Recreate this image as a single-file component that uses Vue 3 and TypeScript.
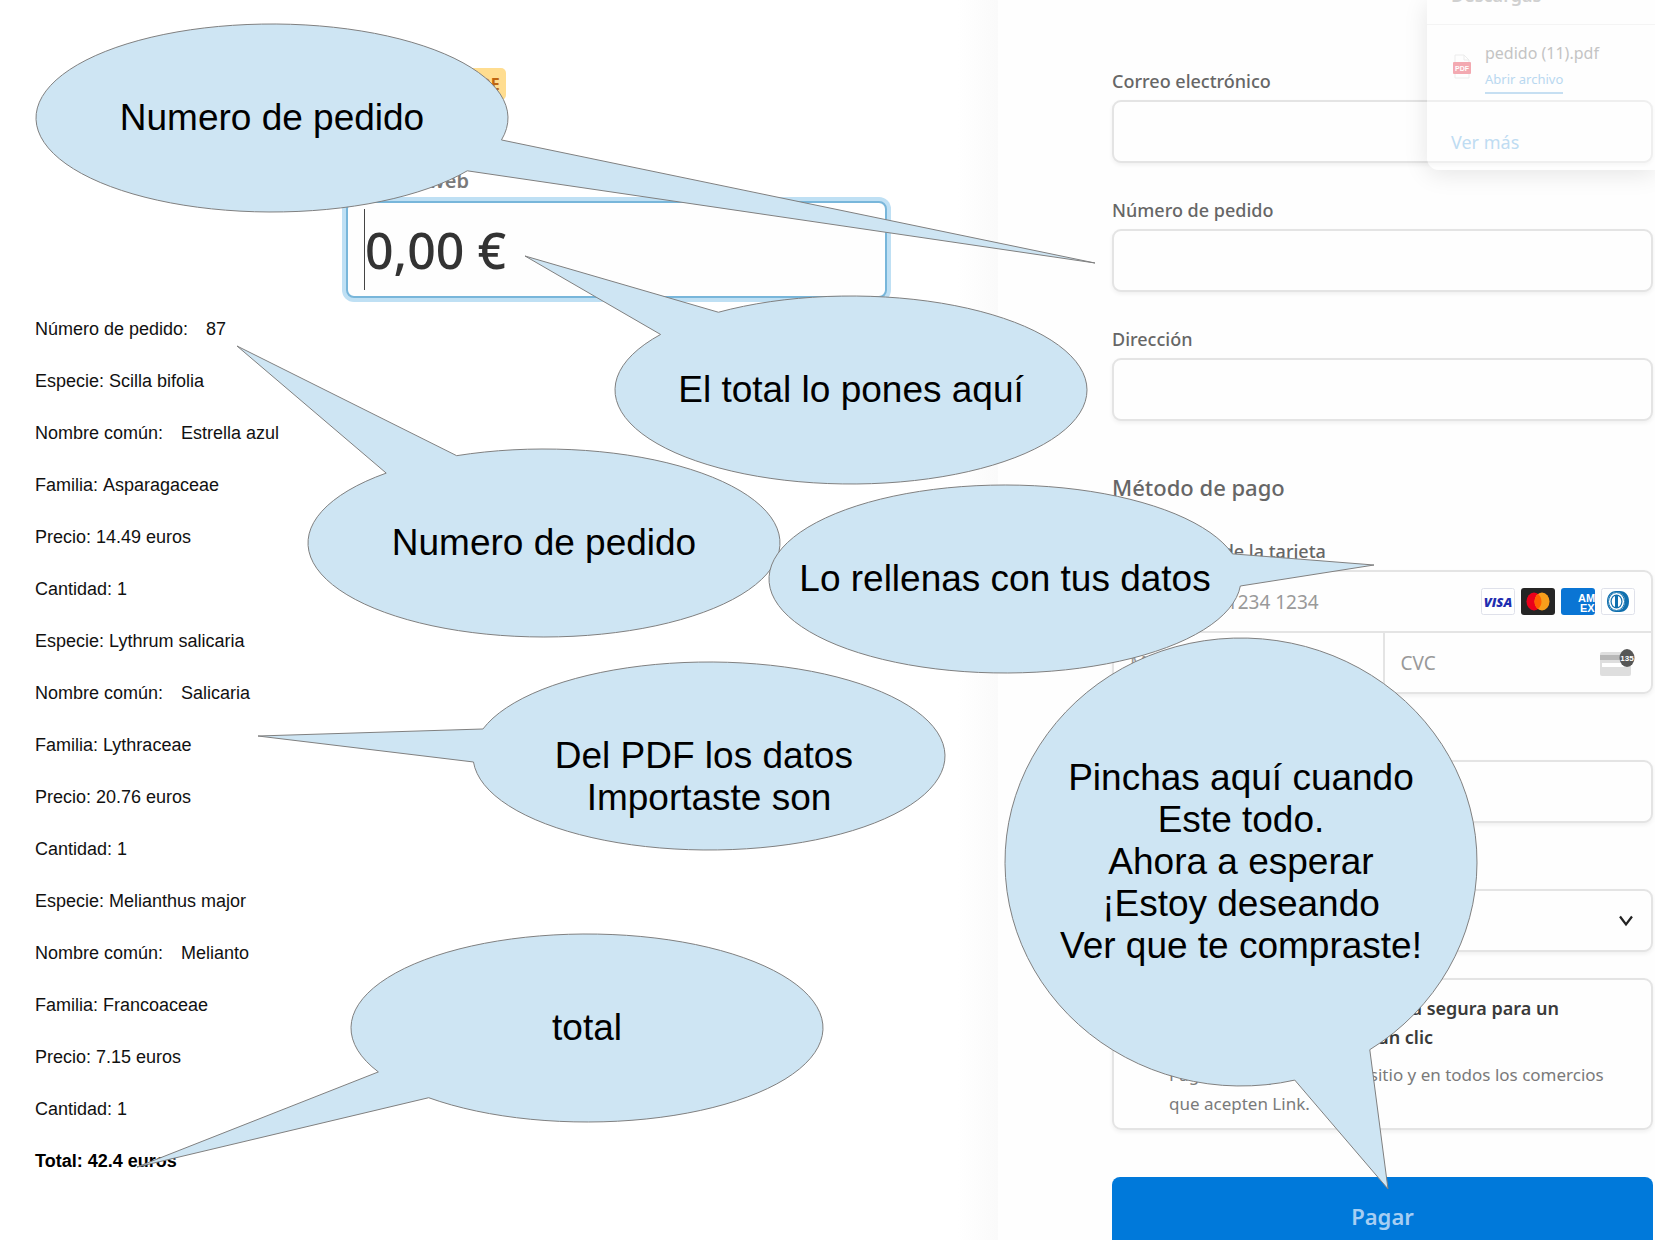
<script setup lang="ts">
import { ref } from 'vue'

interface Point {
  x: number
  y: number
}

interface Bubble {
  id: string
  cx: number
  cy: number
  rx: number
  ry: number
  start: Point
  tip: Point
  end: Point
  text: string
}

interface OrderLine {
  label: string
  value: string
  wide?: boolean
}

const amount = ref('0,00 €')
const email = ref('')
const orderNumber = ref('')
const address = ref('')

const orderLines: OrderLine[] = [
  { label: 'Número de pedido:', value: '87', wide: true },
  { label: 'Especie:', value: 'Scilla bifolia' },
  { label: 'Nombre común:', value: 'Estrella azul', wide: true },
  { label: 'Familia:', value: 'Asparagaceae' },
  { label: 'Precio:', value: '14.49 euros' },
  { label: 'Cantidad:', value: '1' },
  { label: 'Especie:', value: 'Lythrum salicaria' },
  { label: 'Nombre común:', value: 'Salicaria', wide: true },
  { label: 'Familia:', value: 'Lythraceae' },
  { label: 'Precio:', value: '20.76 euros' },
  { label: 'Cantidad:', value: '1' },
  { label: 'Especie:', value: 'Melianthus major' },
  { label: 'Nombre común:', value: 'Melianto', wide: true },
  { label: 'Familia:', value: 'Francoaceae' },
  { label: 'Precio:', value: '7.15 euros' },
  { label: 'Cantidad:', value: '1' },
]

// The tail leaves the ellipse at `start`, reaches `tip` and comes back at `end`, clockwise.
const bubbles: Bubble[] = [
  {
    id: 'order-field', cx: 272, cy: 118, rx: 236, ry: 94,
    start: { x: 502, y: 140 }, tip: { x: 1095, y: 263 }, end: { x: 468, y: 171 },
    text: 'Numero de pedido',
  },
  {
    id: 'amount', cx: 851, cy: 390, rx: 236, ry: 94,
    start: { x: 659, y: 334 }, tip: { x: 525, y: 256 }, end: { x: 718, y: 312 },
    text: 'El total lo pones aquí',
  },
  {
    id: 'order-line', cx: 544, cy: 543, rx: 236, ry: 94,
    start: { x: 386, y: 473 }, tip: { x: 237, y: 346 }, end: { x: 456, y: 455 },
    text: 'Numero de pedido',
  },
  {
    id: 'card', cx: 1005, cy: 579, rx: 236, ry: 94,
    start: { x: 1231, y: 554 }, tip: { x: 1374, y: 565 }, end: { x: 1240, y: 586 },
    text: 'Lo rellenas con tus datos',
  },
  {
    id: 'pdf', cx: 709, cy: 756, rx: 236, ry: 94,
    start: { x: 473, y: 762 }, tip: { x: 258, y: 736 }, end: { x: 483, y: 729 },
    text: '\nDel PDF los datos \nImportaste son',
  },
  {
    id: 'total', cx: 587, cy: 1028, rx: 236, ry: 94,
    start: { x: 428, y: 1098 }, tip: { x: 137, y: 1167 }, end: { x: 378, y: 1072 },
    text: 'total',
  },
  {
    id: 'pay', cx: 1241, cy: 862, rx: 236, ry: 224,
    start: { x: 1370, y: 1050 }, tip: { x: 1388, y: 1189 }, end: { x: 1295, y: 1081 },
    text: 'Pinchas aquí cuando\nEste todo.\nAhora a esperar\n¡Estoy deseando\nVer que te compraste!',
  },
]

function boxOf(b: Bubble) {
  return {
    left: `${b.cx - b.rx}px`,
    top: `${b.cy - b.ry}px`,
    width: `${b.rx * 2}px`,
    height: `${b.ry * 2}px`,
  }
}

// Moves a point onto the rim of the bubble, in the bubble's own coordinates.
function rimPoint(b: Bubble, p: Point): string {
  const angle = Math.atan2((p.y - b.cy) / b.ry, (p.x - b.cx) / b.rx)
  return `${b.rx + b.rx * Math.cos(angle)} ${b.ry + b.ry * Math.sin(angle)}`
}

function outlineOf(b: Bubble): string {
  const start = rimPoint(b, b.start)
  const end = rimPoint(b, b.end)
  const tip = `${b.tip.x - b.cx + b.rx} ${b.tip.y - b.cy + b.ry}`
  return `M${start} L${tip} L${end} A${b.rx} ${b.ry} 0 1 1 ${start} Z`
}
</script>

<template>
  <div class="page">
    <section class="summary">
      <div class="product">
        <span class="badge">TEST MODE</span>
        <label class="product-name" for="amount">Pedidos web</label>
        <div class="amount">
          <span class="caret"></span>
          <input id="amount" v-model="amount" type="text" />
        </div>
      </div>
      <ul class="order">
        <li v-for="(line, i) in orderLines" :key="i" :class="{ wide: line.wide }">
          <span>{{ line.label }}</span>
          <span>{{ line.value }}</span>
        </li>
        <li class="sum">
          <span>Total:</span>
          <span>42.4 euros</span>
        </li>
      </ul>
    </section>

    <form class="checkout" @submit.prevent>
      <div class="field">
        <label for="email">Correo electrónico</label>
        <input id="email" v-model="email" class="box" type="email" />
      </div>
      <div class="field">
        <label for="order">Número de pedido</label>
        <input id="order" v-model="orderNumber" class="box" type="text" />
      </div>
      <div class="field">
        <label for="address">Dirección</label>
        <input id="address" v-model="address" class="box" type="text" />
      </div>

      <h2>Método de pago</h2>

      <div class="field">
        <label for="card">Información de la tarjeta</label>
        <div class="card">
          <div class="card-row">
            <input id="card" type="text" placeholder="1234 1234 1234 1234" />
            <div class="brands">
              <svg width="34" height="27" viewBox="0 0 34 27" role="img" aria-label="Visa">
                <rect x="0.5" y="0.5" width="33" height="26" rx="2" fill="#fff" stroke="#dfe1ea" />
                <text x="17" y="19" text-anchor="middle" class="visa">VISA</text>
              </svg>
              <svg width="34" height="27" viewBox="0 0 34 27" role="img" aria-label="Mastercard">
                <rect width="34" height="27" rx="3" fill="#252525" />
                <ellipse cx="13" cy="13.5" rx="7.5" ry="9" fill="#eb001b" />
                <ellipse cx="21" cy="13.5" rx="7.5" ry="9" fill="#f79e1b" />
                <path d="M17 5.9a7.5 9 0 0 1 0 15.2a7.5 9 0 0 1 0-15.2z" fill="#ff5f00" />
              </svg>
              <svg width="34" height="27" viewBox="0 0 34 27" role="img" aria-label="American Express">
                <defs>
                  <clipPath id="amex"><rect width="34" height="27" rx="3" /></clipPath>
                </defs>
                <g clip-path="url(#amex)">
                  <rect width="34" height="27" fill="#0a75d4" />
                  <text x="17" y="14" class="amex">AM</text>
                  <text x="19" y="24" class="amex">EX</text>
                </g>
              </svg>
              <svg width="34" height="27" viewBox="0 0 34 27" role="img" aria-label="Diners Club">
                <rect x="0.5" y="0.5" width="33" height="26" rx="2" fill="#fff" stroke="#dfe1ea" />
                <path d="M15 3h4c5.500 0 9 4.500 9 10.500S24.500 24 19 24h-4C9.500 24 6 19.500 6 13.500S9.500 3 15 3z" fill="#0f6fae" />
                <ellipse cx="15.500" cy="13.500" rx="8.500" ry="9.500" fill="#fff" />
                <ellipse cx="15.500" cy="13.500" rx="8" ry="9" fill="none" stroke="#0f6fae" stroke-width="1" />
                <ellipse cx="15.500" cy="13.500" rx="6" ry="7" fill="#0f6fae" />
                <path d="M14 8v11c-2-.8-3.300-2.900-3.300-5.500s1.300-4.700 3.300-5.500zM17 8v11c2-.8 3.300-2.900 3.300-5.500s-1.300-4.700-3.300-5.500z" fill="#fff" />
              </svg>
            </div>
          </div>
          <div class="card-row split">
            <input type="text" placeholder="MM / AA" aria-label="Caducidad" />
            <div class="cvc">
              <input type="text" placeholder="CVC" aria-label="CVC" />
              <svg width="35" height="28" viewBox="0 0 35 28" aria-hidden="true">
                <rect x="0" y="3" width="31" height="24" rx="2" fill="#dedede" />
                <rect x="0" y="6" width="31" height="5" fill="#b8b8b8" />
                <rect x="2" y="14" width="26" height="4" fill="#fff" />
                <ellipse cx="27" cy="9" rx="7.500" ry="9" fill="#565656" />
                <text x="27" y="12" text-anchor="middle" class="digits">135</text>
              </svg>
            </div>
          </div>
        </div>
      </div>
      <div class="field">
        <label for="holder">Nombre del titular</label>
        <input id="holder" class="box" type="text" />
      </div>
      <div class="field">
        <label for="country">País o región</label>
        <div class="select">
          <select id="country" class="box">
            <option>España</option>
          </select>
          <svg width="16" height="12" viewBox="0 0 16 12" aria-hidden="true">
            <path d="M2 1.500l6 8 6-8" fill="none" stroke="#222" stroke-width="2.200" />
          </svg>
        </div>
      </div>

      <div class="link-box">
        <input id="save" type="checkbox" />
        <div>
          <label for="save">Guarda mis datos de manera segura para un<br />proceso de compra con un clic</label>
          <p>Paga más rápido en este sitio y en todos los comercios<br />que acepten Link.</p>
        </div>
      </div>

      <button class="pay" type="submit">Pagar</button>
    </form>

    <aside class="downloads">
      <h3>Descargas</h3>
      <div class="file">
        <svg width="18" height="26" viewBox="0 0 18 26" aria-hidden="true">
          <path d="M2 8V1h9l5 5v2M2 19v5h14v-5M11 1v5h5" fill="none" stroke="#ececec" />
          <rect y="8" width="18" height="12" rx="1" fill="#f3a9b1" />
          <text x="9" y="17" text-anchor="middle" class="pdf">PDF</text>
        </svg>
        <div>
          <span class="file-name">pedido (11).pdf</span>
          <a href="#" class="open">Abrir archivo</a>
        </div>
      </div>
      <a href="#" class="more">Ver más</a>
    </aside>

    <div v-for="b in bubbles" :key="b.id" class="bubble" :style="boxOf(b)">
      <svg width="100%" height="100%" aria-hidden="true">
        <path :d="outlineOf(b)" />
      </svg>
      <p>{{ b.text }}</p>
    </div>
  </div>
</template>

<style>
body {
  margin: 0;
  background: #fff;
}
</style>

<style scoped>
.page {
  position: relative;
  display: grid;
  grid-template-columns: minmax(0, 998fr) minmax(0, 657fr);
  height: 100vh;
  overflow: hidden;
  font-family: "Noto Sans", "Open Sans", sans-serif;
  color: #666;
}

input,
select,
button {
  box-sizing: border-box;
  margin: 0;
  font-family: inherit;
}

.summary {
  background: linear-gradient(to right, #fff calc(100% - 40px), #fafafa);
}

.product {
  display: flex;
  flex-direction: column;
  align-items: flex-start;
  padding: 68px 111px 0 346px;
}

.badge {
  margin-left: 59px;
  padding: 0 6px;
  border-radius: 5px;
  background: #ffdd90;
  color: #bf6610;
  font-size: 16px;
  font-weight: 700;
  line-height: 32px;
}

.product-name {
  margin: 67px 0 6px;
  color: #7a7a7a;
  font-size: 20px;
  font-weight: 600;
  line-height: 28px;
}

.amount {
  display: flex;
  align-items: center;
  box-sizing: border-box;
  width: 100%;
  height: 97px;
  padding: 0 16px;
  border: 2px solid #78b6da;
  border-radius: 8px;
  box-shadow: 0 0 0 4px #bfe0f4;
  background: #fefefe;
}

.caret {
  width: 1px;
  height: 81px;
  background: #444;
}

.amount input {
  flex: 1;
  min-width: 0;
  padding: 0;
  border: 0;
  background: none;
  color: #333;
  font-size: 50px;
  font-weight: 500;
  outline: none;
}

.order {
  margin: 5px 0 0;
  padding: 0 0 0 35px;
  list-style: none;
  color: #111;
  font-family: "Liberation Sans", Arial, sans-serif;
  font-size: 18px;
  line-height: 52px;
}

.order li {
  display: flex;
  gap: 5px;
}

.order .wide {
  gap: 18px;
}

.order .sum {
  color: #000;
  font-weight: 700;
}

.checkout {
  display: flex;
  flex-direction: column;
  padding: 67px 2px 0 114px;
  background: #fefefe;
}

.field {
  display: flex;
  flex-direction: column;
  margin-bottom: 33px;
}

.field label {
  margin-bottom: 5px;
  font-size: 18px;
  font-weight: 500;
  line-height: 28px;
}

.box {
  width: 100%;
  height: 63px;
  padding: 0 18px;
  border: 2px solid #e4e4e4;
  border-radius: 9px;
  background: #fefefe;
  box-shadow: 0 2px 4px rgba(0, 0, 0, 0.06);
  font-size: 18px;
}

h2 {
  margin: 18px 0 35px;
  font-size: 22px;
  font-weight: 500;
  line-height: 30px;
}

.card {
  border: 2px solid #e4e4e4;
  border-radius: 9px;
  box-shadow: 0 2px 4px rgba(0, 0, 0, 0.06);
}

.card-row {
  display: flex;
  align-items: center;
  height: 59px;
}

.card-row input {
  flex: 1;
  min-width: 0;
  height: 100%;
  padding: 0 16px;
  border: 0;
  background: none;
  font-size: 19px;
}

.card-row input::placeholder {
  color: #999;
  opacity: 1;
}

.brands {
  display: flex;
  gap: 6px;
  padding-right: 16px;
}

.card-row.split {
  display: grid;
  grid-template-columns: 1fr 1fr;
  border-top: 2px solid #e4e4e4;
}

.cvc {
  display: flex;
  align-items: center;
  min-width: 0;
  height: 100%;
  padding-right: 16px;
  border-left: 2px solid #e4e4e4;
}

.visa {
  fill: #1f2db0;
  font: italic 800 13px "Open Sans", sans-serif;
}

.amex {
  fill: #fff;
  font: 700 11px "Liberation Sans", sans-serif;
}

.digits {
  fill: #fff;
  font: 700 8px "Liberation Sans", sans-serif;
}

.pdf {
  fill: #fff;
  font: 700 7px "Liberation Sans", sans-serif;
}

.select {
  display: grid;
  align-items: center;
}

.select > * {
  grid-area: 1 / 1;
}

.select select {
  appearance: none;
}

.select svg {
  justify-self: end;
  margin-right: 19px;
  pointer-events: none;
}

.link-box {
  display: flex;
  gap: 21px;
  box-sizing: border-box;
  height: 152px;
  margin: -7px 0 47px;
  padding: 14px 16px;
  border: 2px solid #e4e4e4;
  border-radius: 9px;
  box-shadow: 0 2px 4px rgba(0, 0, 0, 0.06);
  white-space: nowrap;
}

.link-box input {
  width: 18px;
  height: 18px;
  margin-top: 6px;
}

.link-box label {
  display: block;
  color: #3a3a3a;
  font-size: 18px;
  font-weight: 600;
  line-height: 29px;
}

.link-box p {
  margin: 8px 0 0;
  color: #7a7a7a;
  font-size: 17px;
  line-height: 29px;
}

.pay {
  flex: none;
  height: 78px;
  border: 0;
  border-radius: 8px;
  background: #0079da;
  color: #a6cef3;
  font-size: 22px;
  font-weight: 600;
}

.downloads {
  position: absolute;
  top: 0;
  right: 0;
  box-sizing: border-box;
  width: 228px;
  height: 170px;
  border-radius: 0 0 0 12px;
  background: rgba(255, 255, 255, 0.4);
  box-shadow: 0 4px 24px rgba(0, 0, 0, 0.1);
}

.downloads h3 {
  height: 44px;
  margin: -20px 0 0;
  padding-left: 24px;
  border-bottom: 1px solid #f4f4f4;
  color: #d0d0d0;
  font-size: 18px;
  font-weight: 600;
  line-height: 30px;
}

.file {
  display: flex;
  gap: 14px;
  align-items: center;
  padding: 14px 0 0 26px;
}

.file div {
  display: flex;
  flex-direction: column;
  align-items: flex-start;
}

.file-name {
  color: #c4c4c4;
  font-size: 16px;
  line-height: 28px;
}

.open {
  border-bottom: 2px solid #c6dff2;
  color: #b9d8f0;
  font-size: 13px;
  line-height: 25px;
  text-decoration: none;
}

.more {
  display: block;
  margin: 32px 0 0 24px;
  color: #bfdcf2;
  font-size: 18px;
  line-height: 32px;
  text-decoration: none;
}

.bubble {
  position: absolute;
  display: grid;
  place-items: center;
  pointer-events: none;
}

.bubble > * {
  grid-area: 1 / 1;
}

.bubble svg {
  overflow: visible;
}

.bubble path {
  fill: #cee5f3;
  stroke: #808080;
}

.bubble p {
  position: relative;
  margin: 0;
  color: #000;
  font-family: "Liberation Sans", Arial, sans-serif;
  font-size: 37px;
  line-height: 42px;
  text-align: center;
  white-space: pre;
}
</style>
